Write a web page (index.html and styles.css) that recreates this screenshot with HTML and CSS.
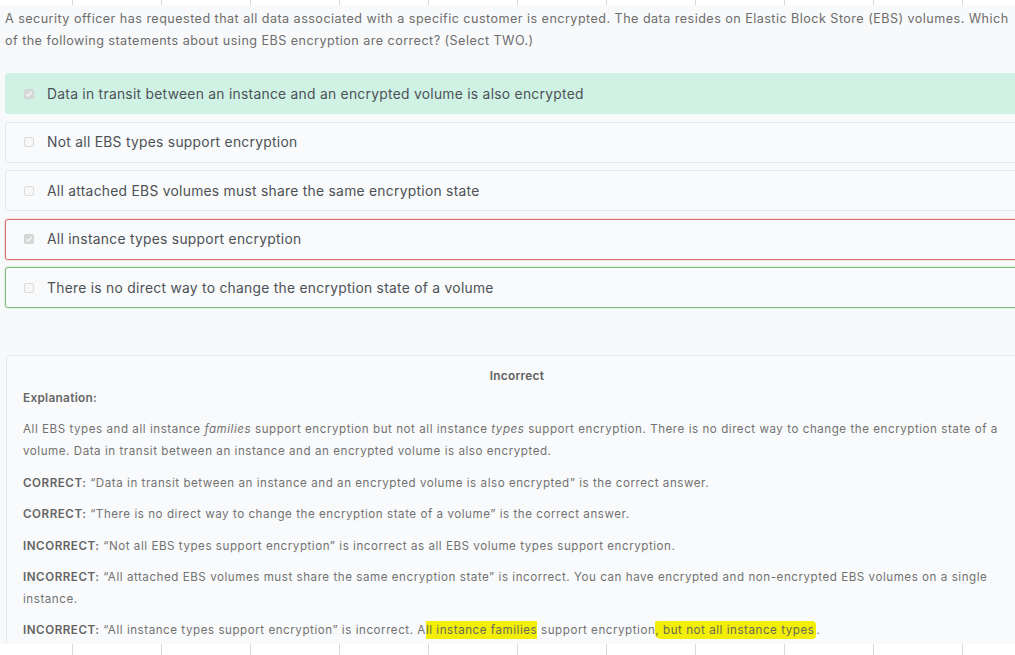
FILE: index.html
```html
<!DOCTYPE html>
<html lang="en">
<head>
<meta charset="utf-8">
<title>EBS encryption question</title>
<link rel="stylesheet" href="styles.css">
</head>
<body>
<div class="ruler">
  <span class="ruler-lead"></span><span class="ruler-cell"></span><span class="ruler-cell"></span><span class="ruler-cell"></span><span class="ruler-cell"></span><span class="ruler-cell"></span><span class="ruler-cell"></span><span class="ruler-cell"></span><span class="ruler-cell"></span><span class="ruler-cell"></span><span class="ruler-cell"></span><span class="ruler-cell"></span>
</div>
<main class="page">
  <p class="question">A security officer has requested that all data associated with a specific customer is encrypted. The data resides on Elastic Block Store (EBS) volumes. Which of the following statements about using EBS encryption are correct? (Select TWO.)</p>

  <ul class="options">
    <li class="option option--chosen-right">
      <span class="check check--on"><svg viewBox="0 0 10 10" width="10" height="10"><path d="M2.3 5.2 L4.2 7 L7.8 3" fill="none" stroke="#f4f4f4" stroke-width="1.4"/></svg></span>
      <span class="option-text">Data in transit between an instance and an encrypted volume is also encrypted</span>
    </li>
    <li class="option">
      <span class="check"></span>
      <span class="option-text">Not all EBS types support encryption</span>
    </li>
    <li class="option">
      <span class="check"></span>
      <span class="option-text">All attached EBS volumes must share the same encryption state</span>
    </li>
    <li class="option option--chosen-wrong">
      <span class="check check--on"><svg viewBox="0 0 10 10" width="10" height="10"><path d="M2.3 5.2 L4.2 7 L7.8 3" fill="none" stroke="#f4f4f4" stroke-width="1.4"/></svg></span>
      <span class="option-text">All instance types support encryption</span>
    </li>
    <li class="option option--missed">
      <span class="check"></span>
      <span class="option-text">There is no direct way to change the encryption state of a volume</span>
    </li>
  </ul>

  <section class="explain">
    <h3 class="verdict">Incorrect</h3>
    <h4 class="explain-title">Explanation:</h4>
    <p>All EBS types and all instance <em>families</em> support encryption but not all instance <em>types</em> support encryption. There is no direct way to change the encryption state of a volume. Data in transit between an instance and an encrypted volume is also encrypted.</p>
    <p><strong>CORRECT:</strong> “Data in transit between an instance and an encrypted volume is also encrypted” is the correct answer.</p>
    <p><strong>CORRECT:</strong> “There is no direct way to change the encryption state of a volume” is the correct answer.</p>
    <p><strong>INCORRECT:</strong> “Not all EBS types support encryption” is incorrect as all EBS volume types support encryption.</p>
    <p><strong>INCORRECT:</strong> “All attached EBS volumes must share the same encryption state” is incorrect. You can have encrypted and non-encrypted EBS volumes on a single instance.</p>
    <p><strong>INCORRECT:</strong> “All instance types support encryption” is incorrect. A<mark class="marker">ll instance families</mark> support encryption<mark class="marker marker--stroke">, but not all instance types</mark>.</p>
  </section>
</main>
<div class="ruler ruler--bottom">
  <span class="ruler-lead"></span><span class="ruler-cell"></span><span class="ruler-cell"></span><span class="ruler-cell"></span><span class="ruler-cell"></span><span class="ruler-cell"></span><span class="ruler-cell"></span><span class="ruler-cell"></span><span class="ruler-cell"></span><span class="ruler-cell"></span><span class="ruler-cell"></span><span class="ruler-cell"></span>
</div>
</body>
</html>
```

FILE: styles.css
```css
* { box-sizing: border-box; }

html, body {
  margin: 0;
  padding: 0;
}

body {
  width: 1015px;
  height: 655px;
  overflow: hidden;
  display: flex;
  flex-direction: column;
  background: #ffffff;
  font-family: Inter, "Noto Sans", "Liberation Sans", sans-serif;
  color: #6b6b6b;
}

.ruler {
  flex: 0 0 5px;
  display: flex;
  background: #ffffff;
}

.ruler--bottom {
  flex: 0 0 11px;
}

.ruler-lead {
  flex: 0 0 72px;
}

.ruler-cell {
  flex: 0 0 89px;
  border-left: 1px solid #d9d9d9;
}

.page {
  flex: 1 1 auto;
  min-height: 0;
  overflow: hidden;
  background: #f8f9fa;
  padding: 3px 0 0 5px;
  width: 1028px;
}

.question {
  margin: 0;
  width: 1012px;
  font-size: 12.6px;
  letter-spacing: 0.46px;
  line-height: 22px;
  color: #6d6d6d;
}

.options {
  list-style: none;
  margin: 21px 0 0 0;
  padding: 0;
  display: flex;
  flex-direction: column;
  gap: 7.6px;
}

.option {
  height: 41px;
  display: flex;
  align-items: center;
  border: 1px solid #e7e8ea;
  border-radius: 3px;
  background: #f9fafb;
  padding-left: 18px;
  font-size: 13.8px;
  letter-spacing: 0.29px;
  color: #4c5156;
}

.option--chosen-right {
  background: #d0f2e5;
  border-color: #d0f2e5;
}

.option--chosen-wrong {
  border-color: #d97070;
  box-shadow: 0 0 0 1px rgba(245, 190, 190, 0.45);
}

.option--missed {
  border-color: #7fbb7f;
  box-shadow: 0 0 0 1px rgba(190, 230, 190, 0.45);
}

.check {
  flex: 0 0 10px;
  width: 10px;
  height: 10px;
  border: 1px solid #dcdcdc;
  border-radius: 2px;
  background: #f7f7f7;
  margin-right: 13px;
  display: flex;
}

.check svg {
  display: block;
  margin: -1px;
}

.check--on {
  background: #d7d9d9;
  border-color: #d2d4d4;
}

.explain {
  margin-top: 47px;
  margin-left: 1px;
  border: 1px solid #e8e9eb;
  border-radius: 3px;
  background: #f9fafb;
  padding: 9px 16px 0 16px;
  font-size: 11.6px;
  letter-spacing: 0.54px;
  line-height: 22px;
  color: #727272;
}

.verdict {
  margin: 0;
  text-align: center;
  font-size: 11.8px;
  font-weight: 600;
  letter-spacing: 0.3px;
  color: #606060;
  line-height: 22px;
}

.explain-title {
  margin: 0 0 9px 0;
  font-size: 11.8px;
  font-weight: 600;
  letter-spacing: 0.3px;
  color: #666666;
  line-height: 22px;
}

.explain p {
  margin: 0 0 9.4px 0;
  width: 990px;
}

.explain strong {
  font-weight: 600;
  color: #636363;
}

.marker {
  background: #f2ee05;
  color: #6a6a5a;
  padding: 2px 0;
}

.marker--stroke {
  border-radius: 2px 4px 4px 6px;
  padding: 2px 2px 2px 0;
}
```
